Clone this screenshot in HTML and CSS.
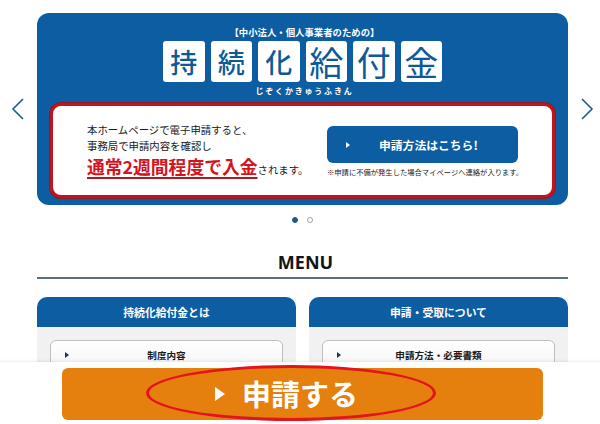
FILE: index.html
```html
<!DOCTYPE html>
<html lang="ja">
<head>
<meta charset="utf-8">
<title>持続化給付金</title>
<link rel="stylesheet" href="styles.css">
</head>
<body>
<main class="page">
  <section class="carousel">
    <button class="arrow arrow-prev" aria-label="前へ">
      <svg width="14" height="24" viewBox="0 0 14 24"><path d="M12 2 L2 12 L12 22" fill="none" stroke="#1b5b93" stroke-width="1.6"/></svg>
    </button>
    <div class="banner">
      <p class="banner-kicker">【中小法人・個人事業者のための】</p>
      <div class="tiles">
        <span class="tile tile-sm">持</span>
        <span class="tile tile-sm">続</span>
        <span class="tile tile-sm">化</span>
        <span class="tile tile-lg">給</span>
        <span class="tile tile-lg">付</span>
        <span class="tile tile-lg">金</span>
      </div>
      <p class="banner-ruby">じぞくかきゅうふきん</p>
      <div class="notice">
        <div class="notice-text">
          <p class="notice-line">本ホームページで電子申請すると、</p>
          <p class="notice-line">事務局で申請内容を確認し</p>
          <p class="notice-lead"><span class="notice-em">通常2週間程度で入金</span>されます。</p>
        </div>
        <div class="notice-action">
          <a class="btn-blue" href="#"><span class="tri tri-sm"></span><span class="btn-blue-label">申請方法はこちら!</span></a>
          <p class="notice-note">※申請に不備が発生した場合マイページへ連絡が入ります。</p>
        </div>
      </div>
    </div>
    <button class="arrow arrow-next" aria-label="次へ">
      <svg width="14" height="24" viewBox="0 0 14 24"><path d="M2 2 L12 12 L2 22" fill="none" stroke="#1b5b93" stroke-width="1.6"/></svg>
    </button>
  </section>

  <div class="dots">
    <span class="dot dot-on"></span>
    <span class="dot"></span>
  </div>

  <h2 class="menu-title">MENU</h2>

  <div class="menu-grid">
    <section class="card">
      <h3 class="card-head">持続化給付金とは</h3>
      <div class="card-body">
        <a class="item" href="#"><span class="tri tri-dark"></span><span class="item-label">制度内容</span></a>
        <a class="item" href="#"><span class="tri tri-dark"></span><span class="item-label">給付額</span></a>
      </div>
    </section>
    <section class="card">
      <h3 class="card-head">申請・受取について</h3>
      <div class="card-body">
        <a class="item" href="#"><span class="tri tri-dark"></span><span class="item-label">申請方法・必要書類</span></a>
        <a class="item" href="#"><span class="tri tri-dark"></span><span class="item-label">よくあるご質問</span></a>
      </div>
    </section>
  </div>
</main>

<footer class="apply-bar">
  <a class="apply-btn" href="#"><span class="tri tri-lg"></span><span class="apply-label">申請する</span></a>
  <span class="mark-ellipse"></span>
</footer>
</body>
</html>
```

FILE: styles.css
```css
* { box-sizing: border-box; }

html, body {
  margin: 0;
  padding: 0;
  background: #ffffff;
}

body {
  font-family: "Noto Sans CJK JP", "Noto Sans", sans-serif;
  color: #1a1a1a;
  width: 600px;
  height: 424px;
  overflow: hidden;
}

p, h2, h3 { margin: 0; }

a { text-decoration: none; color: inherit; }

.page {
  padding-top: 13px;
}

/* carousel */
.carousel {
  display: flex;
  align-items: center;
}

.arrow {
  border: 0;
  background: none;
  padding: 0;
  display: flex;
  align-items: center;
  justify-content: center;
  height: 40px;
}

.arrow-prev { width: 37px; padding-right: 1px; }
.arrow-next { width: 32px; padding-left: 6px; }

.banner {
  flex: 1;
  background: #0c5da2;
  border-radius: 12px;
  padding: 14px 13px 7px;
  display: flex;
  flex-direction: column;
  align-items: center;
  height: 192px;
}

.banner-kicker {
  color: #ffffff;
  font-size: 9.4px;
  line-height: 10px;
  font-weight: 700;
  margin-left: 4px;
}

.tiles {
  display: flex;
  gap: 6px;
  margin-top: 4px;
}

.tile {
  width: 41.5px;
  height: 41px;
  background: #ffffff;
  border-radius: 3px;
  display: flex;
  align-items: center;
  justify-content: center;
  color: #0d5a98;
}

.tile-sm {
  font-size: 27px;
  font-weight: 500;
  line-height: 1;
}

.tile-lg {
  font-size: 34px;
  font-weight: 400;
  line-height: 1;
}

.banner-ruby {
  color: #ffffff;
  font-size: 8px;
  line-height: 8px;
  font-weight: 700;
  letter-spacing: 1.8px;
  margin-top: 5px;
  margin-left: 4px;
}

.notice {
  margin-top: 8px;
  align-self: stretch;
  height: 95px;
  background: #ffffff;
  border: 3px solid #c0151f;
  border-radius: 11px;
  box-shadow: 0 0 0 1px #8e1a26;
  display: flex;
  align-items: center;
  justify-content: space-between;
  padding: 2px 27px 0 34px;
}

.notice-line {
  font-size: 10.4px;
  line-height: 16px;
  color: #1a1a1a;
}

.notice-lead {
  font-size: 10.4px;
  line-height: 24px;
  color: #1a1a1a;
}

.notice-em {
  color: #d3141e;
  font-size: 17.8px;
  font-weight: 700;
  text-decoration: underline;
  text-decoration-color: #b01a24;
  text-decoration-thickness: 1.5px;
  text-underline-offset: 3px;
}

.notice-action {
  width: 198px;
  display: flex;
  flex-direction: column;
}

.btn-blue {
  width: 191px;
  height: 37px;
  background: #0c5da2;
  border-radius: 6px;
  display: flex;
  align-items: center;
  padding-left: 19px;
  color: #ffffff;
}

.btn-blue-label {
  font-size: 11.8px;
  font-weight: 700;
  margin-left: 29px;
}

.notice-note {
  margin-top: 4px;
  font-size: 7.3px;
  line-height: 10px;
  color: #1a1a1a;
  white-space: nowrap;
}

/* triangles */
.tri {
  display: inline-block;
  width: 0;
  height: 0;
  border-style: solid;
  border-color: transparent;
}

.tri-sm {
  border-width: 3px 0 3px 4px;
  border-left-color: #ffffff;
}

.tri-dark {
  border-width: 3px 0 3px 4px;
  border-left-color: #1c3550;
}

.tri-lg {
  border-width: 7px 0 7px 10px;
  border-left-color: #ffffff;
}

/* dots */
.dots {
  display: flex;
  justify-content: center;
  gap: 9px;
  margin-top: 12px;
  padding-left: 5px;
}

.dot {
  width: 6px;
  height: 6px;
  border-radius: 50%;
  border: 1px solid #9aa3aa;
  background: #ffffff;
}

.dot-on {
  background: #1b5a8c;
  border-color: #1b5a8c;
}

/* menu */
.menu-title {
  margin: 28px 32px 0 37px;
  padding-bottom: 4px;
  border-bottom: 2px solid #5c6f7c;
  text-align: center;
  font-family: "Noto Sans", "Open Sans", sans-serif;
  font-size: 18px;
  line-height: 22px;
  font-weight: 700;
  color: #141414;
  padding-left: 6px;
}

.menu-grid {
  margin: 18px 32px 0 37px;
  display: grid;
  grid-template-columns: 1fr 1fr;
  gap: 13px;
}

.card-head {
  height: 30px;
  background: #0c5da2;
  border-radius: 10px 10px 0 0;
  color: #ffffff;
  font-size: 10.8px;
  font-weight: 700;
  display: flex;
  align-items: center;
  justify-content: center;
}

.card-body {
  background: #f1f1f1;
  padding: 13px 13px;
  display: flex;
  flex-direction: column;
  gap: 8px;
}

.item {
  height: 30px;
  border: 1px solid #bfbfbf;
  border-radius: 6px;
  background: linear-gradient(#ffffff, #f4f4f4);
  display: flex;
  align-items: center;
  padding-left: 14px;
  padding-bottom: 1px;
}

.item-label {
  flex: 1;
  text-align: center;
  font-size: 9.6px;
  font-weight: 700;
  color: #1a1a1a;
  padding-right: 18px;
}

/* fixed apply bar */
.apply-bar {
  position: fixed;
  left: 0;
  right: 0;
  bottom: 0;
  height: 62px;
  background: #ffffff;
  box-shadow: 0 -1px 3px rgba(0, 0, 0, 0.08);
  padding: 6px 57px 4px 62px;
}

.apply-btn {
  height: 52px;
  background: #e57f0e;
  border-radius: 6px;
  display: flex;
  align-items: center;
  justify-content: center;
  padding-right: 32px;
  color: #ffffff;
}

.apply-label {
  margin-left: 17px;
  font-size: 29px;
  font-weight: 700;
  line-height: 1;
  padding-bottom: 2px;
}

.mark-ellipse {
  position: absolute;
  left: 146px;
  top: 3px;
  width: 290px;
  height: 56px;
  border: 3px solid #e3141b;
  border-radius: 50%;
  pointer-events: none;
}
```
